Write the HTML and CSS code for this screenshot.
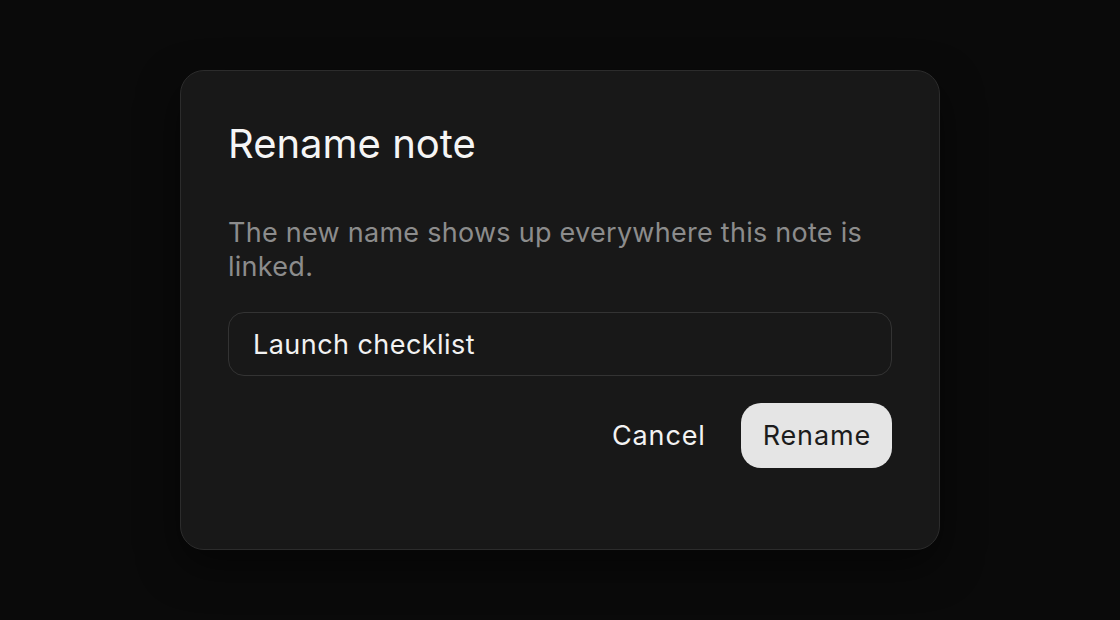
FILE: index.html
```html
<!DOCTYPE html>
<html lang="en">
<head>
<meta charset="utf-8">
<title>Rename note</title>
<link rel="stylesheet" href="styles.css">
</head>
<body>
<div class="backdrop">
  <div class="dialog" role="dialog" aria-labelledby="dlg-title">
    <h2 class="dialog-title" id="dlg-title">Rename note</h2>
    <p class="dialog-desc">The new name shows up everywhere this note is linked.</p>
    <div class="field">Launch checklist</div>
    <div class="actions">
      <button class="btn btn-ghost">Cancel</button>
      <button class="btn btn-primary">Rename</button>
    </div>
  </div>
</div>
</body>
</html>
```

FILE: styles.css
```css
html, body {
  margin: 0;
  padding: 0;
  background: #0a0a0a;
}
body {
  font-family: Inter, "Liberation Sans", sans-serif;
  color: #f2f2f2;
}
.backdrop {
  width: 1120px;
  height: 620px;
  display: flex;
  align-items: center;
  justify-content: center;
}
.dialog {
  box-sizing: border-box;
  width: 760px;
  height: 480px;
  padding: 49px 47px 48px;
  background: #181818;
  border: 1px solid #2c2c2c;
  border-radius: 24px;
  box-shadow: 0 16px 40px rgba(0, 0, 0, 0.5);
  display: flex;
  flex-direction: column;
}
.dialog-title {
  margin: 0;
  font-size: 40px;
  line-height: 48px;
  font-weight: 400;
  color: #f5f5f5;
}
.dialog-desc {
  margin: 48px 0 28px;
  font-size: 27px;
  letter-spacing: 0.27px;
  line-height: 34px;
  color: #8c8c8c;
}
.field {
  box-sizing: border-box;
  height: 64px;
  padding: 0 24px;
  display: flex;
  align-items: center;
  border: 1px solid #333;
  border-radius: 16px;
  font-size: 27px;
  letter-spacing: 0.45px;
  color: #f2f2f2;
}
.actions {
  margin-top: 27px;
  display: flex;
  justify-content: flex-end;
  gap: 14px;
}
.btn {
  font-family: inherit;
  font-size: 27px;
  letter-spacing: 0.85px;
  height: 65px;
  padding: 0 21px 0 22px;
  border: 0;
  border-radius: 20px;
  cursor: pointer;
}
.btn-ghost {
  background: transparent;
  color: #f2f2f2;
}
.btn-primary {
  background: #e5e5e5;
  color: #1c1c1c;
}
```
